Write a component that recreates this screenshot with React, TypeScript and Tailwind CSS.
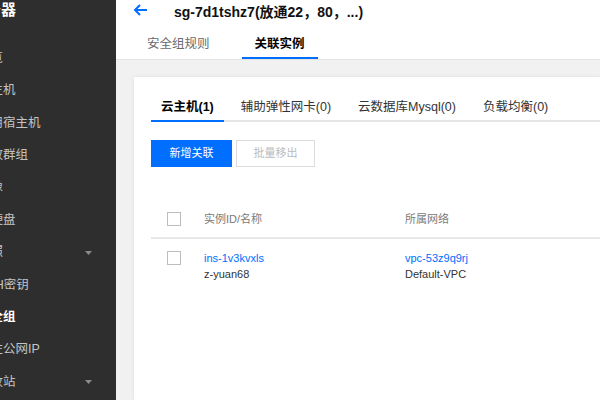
import React from "react";

const font = { fontFamily: '"Liberation Sans", "Noto Sans CJK SC", sans-serif' };

const navItems = [
    { label: "概览" },
    { label: "云主机" },
    { label: "专用宿主机" },
    { label: "置放群组" },
    { label: "镜像" },
    { label: "云硬盘" },
    { label: "快照", caret: true },
    { label: "SSH密钥" },
    { label: "安全组", active: true },
    { label: "弹性公网IP" },
    { label: "回收站", caret: true },
];

function Caret() {
    return (
        <svg width="7" height="4" viewBox="0 0 7 4" className="ml-auto mr-[24px]">
            <path d="M0 0H7L3.5 4Z" fill="#8a8a8a" />
        </svg>
    );
}

function Sidebar() {
    return (
        <div className="w-[116px] shrink-0 h-full bg-[#2e2e2e] overflow-hidden">
            <div className="h-[20px] leading-[20px] -ml-[44px] text-[15px] font-bold text-white whitespace-nowrap">云服务器</div>
            <div className="mt-[22px] flex flex-col">
                {navItems.map((item) => (
                    <div key={item.label} className="h-[32.4px] flex items-center whitespace-nowrap">
                        <span className={`-ml-[22px] text-[12.5px] ${item.active ? "text-white font-bold" : "text-[#c4c4c4]"}`}>
                            {item.label}
                        </span>
                        {item.caret && <Caret />}
                    </div>
                ))}
            </div>
        </div>
    );
}

function Checkbox() {
    return <div className="w-[14px] h-[14px] border border-[#bdbdbd] bg-white shrink-0" />;
}

function Header() {
    return (
        <div className="h-[60px] bg-white border-b border-[#e2e2e2] shrink-0">
            <div className="h-[24px] flex items-center pl-[17px]">
                <svg width="15" height="12" viewBox="0 0 15 12" className="mb-[5px]">
                    <path d="M14 6H2M7 1L2 6L7 11" fill="none" stroke="#006eff" strokeWidth="2" />
                </svg>
                <span className="ml-[26px] text-[14px] font-bold text-[#111]">sg-7d1tshz7(放通22，80，...)</span>
            </div>
            <div className="mt-[11px] flex pl-[18px] gap-[19px]">
                <div className="px-[13px] leading-[18px] pb-[4px] border-b-2 border-transparent text-[12.5px] text-[#6a6a6a]">安全组规则</div>
                <div className="px-[13px] leading-[18px] pb-[4px] border-b-2 border-[#006eff] text-[12.5px] font-bold text-black">关联实例</div>
            </div>
        </div>
    );
}

const subTabs = ["云主机(1)", "辅助弹性网卡(0)", "云数据库Mysql(0)", "负载均衡(0)"];

function Panel() {
    return (
        <div className="flex-1 bg-white shadow-[0_0_4px_rgba(0,0,0,0.08)] pl-[17px]">
            <div className="mt-[20px] flex gap-[7px] border-b-2 border-[#e6e6e6] whitespace-nowrap">
                {subTabs.map((t, i) => (
                    <div
                        key={t}
                        className={`px-[10px] leading-[20px] pb-[3px] -mb-[2px] border-b-2 text-[12.5px] ${i === 0 ? "border-[#006eff] font-bold text-black" : "border-transparent text-[#333]"}`}
                    >
                        {t}
                    </div>
                ))}
            </div>
            <div className="mt-[18px] flex gap-[4px]">
                <button className="w-[81px] h-[27px] bg-[#006eff] text-white text-[11px]">新增关联</button>
                <button className="w-[79px] h-[27px] bg-white border border-[#dcdcdc] text-[#bbbbbb] text-[11px]">批量移出</button>
            </div>
            <div className="mt-[34px] text-[11px]">
                <div className="h-[38px] flex items-center pl-[16px] border-b-2 border-[#e8e8e8]">
                    <div className="w-[37px]">
                        <Checkbox />
                    </div>
                    <div className="w-[201px] text-[#7a7a7a]">实例ID/名称</div>
                    <div className="text-[#7a7a7a]">所属网络</div>
                </div>
                <div className="flex pl-[16px] pt-[11px]">
                    <div className="w-[37px] pt-[1px]">
                        <Checkbox />
                    </div>
                    <div className="w-[201px] leading-[16px]">
                        <div className="text-[#006eff]">ins-1v3kvxls</div>
                        <div className="text-[#333]">z-yuan68</div>
                    </div>
                    <div className="leading-[16px]">
                        <div className="text-[#006eff]">vpc-53z9q9rj</div>
                        <div className="text-[#333]">Default-VPC</div>
                    </div>
                </div>
            </div>
        </div>
    );
}

export default function App() {
    return (
        <div className="w-[600px] h-[400px] flex overflow-hidden bg-[#f1f1f1]" style={font}>
            <Sidebar />
            <div className="flex-1 flex flex-col min-w-0">
                <Header />
                <div className="flex-1 flex pl-[18px] pt-[17px]">
                    <Panel />
                </div>
            </div>
        </div>
    );
}
